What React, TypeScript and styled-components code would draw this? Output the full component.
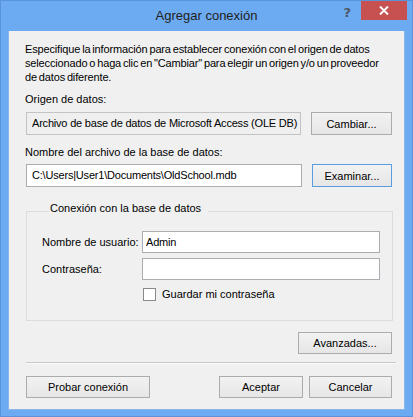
import React from "react";
import styled, { createGlobalStyle } from "styled-components";

const Global = createGlobalStyle`
  html, body { margin: 0; padding: 0; background: #ffffff; }
  * { box-sizing: border-box; }
`;

const FONT = `"Liberation Sans", Arial, sans-serif`;

const Window = styled.div`
  width: 413px;
  height: 417px;
  background: #6caaf1;
  border: 1px solid #5a93d8;
  display: flex;
  flex-direction: column;
  font-family: ${FONT};
  font-size: 11px;
  color: #000;
`;

const TitleBar = styled.div`
  height: 30px;
  flex: none;
  display: grid;
  grid-template-columns: 1fr auto 1fr;
  align-items: start;
`;

const Title = styled.div`
  grid-column: 2;
  font-size: 13px;
  line-height: 30px;
  color: #222;
`;

const Controls = styled.div`
  grid-column: 3;
  justify-self: end;
  display: flex;
  align-items: flex-start;
`;

const HelpButton = styled.div`
  font-family: "DejaVu Sans", sans-serif;
  font-weight: bold;
  font-size: 13px;
  line-height: 13px;
  color: #4d5866;
  margin-top: 5px;
  margin-right: 10px;
`;

const CloseButton = styled.div`
  width: 46px;
  height: 19px;
  background: #c75050;
  margin-right: 5px;
  display: flex;
  align-items: center;
  justify-content: center;
`;

const Client = styled.div`
  flex: 1;
  margin: 0 7px 6px 7px;
  background: #f0f0f0;
  border: 1px solid #8ab6ea;
  border-top: none;
  padding: 11px 12px 0 16px;
  display: flex;
  flex-direction: column;
`;

const Intro = styled.p`
  margin: 0;
  line-height: 14px;
  letter-spacing: -0.15px;
  word-spacing: -1px;
`;

const FieldLabel = styled.div<{ $top: number }>`
  margin-top: ${(p) => p.$top}px;
  line-height: 14px;
`;

const FieldRow = styled.div<{ $top: number }>`
  margin-top: ${(p) => p.$top}px;
  display: flex;
  gap: 10px;
  padding-left: 1px;
`;

const TextBox = styled.div<{ $readOnly?: boolean; $pad?: number; $h?: number }>`
  flex: 1;
  min-width: 0;
  height: ${(p) => p.$h ?? 23}px;
  border: 1px solid ${(p) => (p.$readOnly ? "#c3c3c3" : "#abadb3")};
  background: ${(p) => (p.$readOnly ? "#efefef" : "#ffffff")};
  padding-left: ${(p) => p.$pad ?? 5}px;
  line-height: ${(p) => (p.$h ?? 23) - 2}px;
  letter-spacing: -0.2px;
  white-space: nowrap;
  overflow: hidden;
`;

const Button = styled.div<{ $w: number; $default?: boolean; $h?: number }>`
  width: ${(p) => p.$w}px;
  height: ${(p) => p.$h ?? 23}px;
  flex: none;
  border: 1px solid ${(p) => (p.$default ? "#5a9ee0" : "#acacac")};
  background: linear-gradient(#f2f2f2, #e6e6e6);
  display: flex;
  align-items: center;
  justify-content: center;
  line-height: 14px;
`;

const GroupBox = styled.fieldset`
  margin: 14px -1px 0 1px;
  padding: 10px 12px 19px 15px;
  border: 1px solid #dcdcdc;
  min-width: 0;
`;

const Legend = styled.legend`
  margin-left: 7px;
  padding: 0 7px 6px 1px;
  line-height: 14px;
`;

const FormGrid = styled.div`
  display: grid;
  grid-template-columns: 100px 1fr;
  row-gap: 5px;
  align-items: center;
`;

const FormLabel = styled.span`
  white-space: nowrap;
  line-height: 14px;
`;

const CheckRow = styled.label`
  grid-column: 2;
  display: flex;
  align-items: center;
  gap: 6px;
  margin-top: 2px;
  margin-left: 1px;
  line-height: 14px;
`;

const CheckBox = styled.span`
  width: 13px;
  height: 13px;
  border: 1px solid #8a8a8a;
  background: #fff;
  flex: none;
`;

const ActionRow = styled.div<{ $top: number; $spread?: boolean }>`
  margin-top: ${(p) => p.$top}px;
  display: flex;
  justify-content: ${(p) => (p.$spread ? "space-between" : "flex-end")};
  padding-left: 1px;
`;

const ButtonGroup = styled.div`
  display: flex;
  gap: 6px;
`;

const Separator = styled.div`
  margin: 8px -4px 0 1px;
  height: 1px;
  background: #c9c9c9;
  border-bottom: 1px solid #fbfbfb;
  box-sizing: content-box;
`;

export default function App() {
  return (
    <>
      <Global />
      <Window>
        <TitleBar>
          <Title>Agregar conexión</Title>
          <Controls>
            <HelpButton>?</HelpButton>
            <CloseButton>
              <svg width="10" height="9" viewBox="0 0 10 9">
                <path d="M1 0.5 L9 8.5 M9 0.5 L1 8.5" stroke="#ffffff" strokeWidth="2" />
              </svg>
            </CloseButton>
          </Controls>
        </TitleBar>
        <Client>
          <Intro>
            Especifique la información para establecer conexión con el origen de datos
            seleccionado o haga clic en "Cambiar" para elegir un origen y/o un proveedor
            de datos diferente.
          </Intro>
          <FieldLabel $top={8}>Origen de datos:</FieldLabel>
          <FieldRow $top={6}>
            <TextBox $readOnly>Archivo de base de datos de Microsoft Access (OLE DB)</TextBox>
            <Button $w={81}>Cambiar...</Button>
          </FieldRow>
          <FieldLabel $top={10}>Nombre del archivo de la base de datos:</FieldLabel>
          <FieldRow $top={5}>
            <TextBox>C:\Users|User1\Documents\OldSchool.mdb</TextBox>
            <Button $w={80} $default>
              Examinar...
            </Button>
          </FieldRow>
          <GroupBox>
            <Legend>Conexión con la base de datos</Legend>
            <FormGrid>
              <FormLabel>Nombre de usuario:</FormLabel>
              <TextBox $pad={3} $h={22}>Admin</TextBox>
              <FormLabel>Contraseña:</FormLabel>
              <TextBox $pad={3} $h={22} />
              <CheckRow>
                <CheckBox />
                Guardar mi contraseña
              </CheckRow>
            </FormGrid>
          </GroupBox>
          <ActionRow $top={11}>
            <Button $w={94} $h={22}>
              Avanzadas...
            </Button>
          </ActionRow>
          <Separator />
          <ActionRow $top={12} $spread>
            <Button $w={124} $h={22}>
              Probar conexión
            </Button>
            <ButtonGroup>
              <Button $w={84} $h={22}>
                Aceptar
              </Button>
              <Button $w={83} $h={22}>
                Cancelar
              </Button>
            </ButtonGroup>
          </ActionRow>
        </Client>
      </Window>
    </>
  );
}
